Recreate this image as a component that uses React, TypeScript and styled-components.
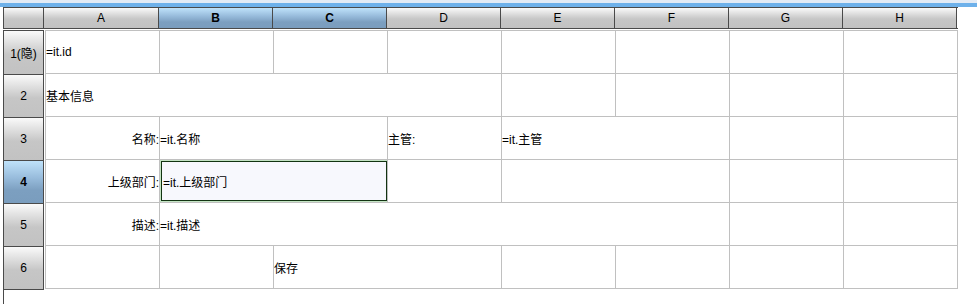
import styled, { createGlobalStyle, css } from "styled-components";

const GlobalStyle = createGlobalStyle`
  html, body {
    margin: 0;
    padding: 0;
    background: #ffffff;
  }
  body {
    font-family: "Liberation Sans", "Noto Sans CJK SC", sans-serif;
    font-size: 12px;
    color: #000;
  }
`;

type Cell = {
  text?: string;
  span?: number;
  align?: "left" | "right";
  selected?: boolean;
};

const COLS = ["A", "B", "C", "D", "E", "F", "G", "H"];
const SELECTED_COLS = ["B", "C"];
const SELECTED_ROW = 4;

const rows: { label: string; cells: Cell[] }[] = [
  {
    label: "1(隐)",
    cells: [{ text: "=it.id" }, {}, {}, {}, {}, {}, {}, {}],
  },
  {
    label: "2",
    cells: [{ text: "基本信息", span: 4 }, {}, {}, {}, {}],
  },
  {
    label: "3",
    cells: [
      { text: "名称:", align: "right" },
      { text: "=it.名称", span: 2 },
      { text: "主管:" },
      { text: "=it.主管", span: 2 },
      {},
      {},
    ],
  },
  {
    label: "4",
    cells: [
      { text: "上级部门:", align: "right" },
      { text: "=it.上级部门", span: 2, selected: true },
      {},
      { span: 2 },
      {},
      {},
    ],
  },
  {
    label: "5",
    cells: [
      { text: "描述:", align: "right" },
      { text: "=it.描述", span: 5 },
      {},
      {},
    ],
  },
  {
    label: "6",
    cells: [{}, {}, { text: "保存", span: 2 }, {}, {}, {}, {}],
  },
];

const App = () => {
  return (
    <Page>
      <GlobalStyle />
      <TopBar />
      <HeaderRow>
        <Corner />
        {COLS.map((c, i) => (
          <ColHeader key={c} first={i === 0} active={SELECTED_COLS.includes(c)}>
            {c}
          </ColHeader>
        ))}
      </HeaderRow>
      <Body>
        <RowHeaders>
          {rows.map((r, i) => (
            <RowHeader key={r.label} active={i + 1 === SELECTED_ROW}>
              {r.label}
            </RowHeader>
          ))}
        </RowHeaders>
        <Grid>
          {rows.map((r, ri) =>
            r.cells.map((cell, ci) => (
              <GridCell key={`${ri}-${ci}`} span={cell.span ?? 1} align={cell.align ?? "left"}>
                {cell.selected ? <Selection>{cell.text}</Selection> : cell.text}
              </GridCell>
            ))
          )}
        </Grid>
      </Body>
    </Page>
  );
};

export default App;

const Page = styled.div`
  width: 977px;
  height: 304px;
  overflow: hidden;
  display: flex;
  flex-direction: column;
`;

const TopBar = styled.div`
  height: 7px;
  flex-shrink: 0;
  background: linear-gradient(#e3ebf5 0 3px, #6eb1ea 3px 7px);
`;

const headerFace = css<{ active?: boolean }>`
  background: ${({ active }) =>
    active
      ? "linear-gradient(#bfe2fa 0%, #98bcdc 40%, #7c9fc0 70%, #7a9dbe 100%)"
      : "linear-gradient(#fafafa 0%, #e2e2e2 25%, #c6c6c6 55%, #c2c2c2 100%)"};
  font-weight: ${({ active }) => (active ? "bold" : "normal")};
`;

const HeaderRow = styled.div`
  display: flex;
  margin-left: 3px;
  height: 22px;
  flex-shrink: 0;
  box-sizing: border-box;
  border-top: 1px solid #4a4a4a;
  border-bottom: 1px solid #4a4a4a;
  border-left: 1px solid #4a4a4a;
  width: 955px;
`;

const Corner = styled.div`
  width: 40px;
  box-sizing: border-box;
  border-right: 1px solid #4a4a4a;
  background: linear-gradient(#fafafa 0%, #e2e2e2 25%, #c6c6c6 55%, #c2c2c2 100%);
`;

const ColHeader = styled.div<{ active?: boolean; first?: boolean }>`
  ${headerFace};
  width: ${({ first }) => (first ? 115 : 114)}px;
  box-sizing: border-box;
  border-right: 1px solid #4a4a4a;
  display: flex;
  align-items: center;
  justify-content: center;
  font-size: 12px;
  line-height: 1;
`;

const Body = styled.div`
  display: flex;
  flex: 1;
  align-items: flex-start;
  padding-top: 1px;
`;

const RowHeaders = styled.div`
  margin-left: 3px;
  width: 41px;
  align-self: stretch;
  box-sizing: border-box;
  border-left: 1px solid #4a4a4a;
  margin-right: 1px;
  display: flex;
  flex-direction: column;
`;

const RowHeader = styled.div<{ active?: boolean }>`
  ${headerFace};
  height: 43px;
  box-sizing: border-box;
  border-top: 1px solid #4a4a4a;
  border-right: 1px solid #4a4a4a;
  display: flex;
  align-items: center;
  justify-content: center;
  font-size: 12px;

  &:first-child {
    height: 44px;
  }

  &:last-child {
    height: 44px;
    border-bottom: 1px solid #4a4a4a;
  }
`;

const Grid = styled.div`
  display: grid;
  grid-template-columns: repeat(8, 114px);
  grid-auto-rows: 43px;
  border-top: 1px solid #c0c0c0;
  border-left: 1px solid #c0c0c0;
`;

const GridCell = styled.div<{ span: number; align: "left" | "right" }>`
  grid-column: span ${({ span }) => span};
  box-sizing: border-box;
  border-right: 1px solid #c0c0c0;
  border-bottom: 1px solid #c0c0c0;
  display: flex;
  align-items: center;
  justify-content: ${({ align }) => (align === "right" ? "flex-end" : "flex-start")};
  white-space: nowrap;
  overflow: hidden;
  font-size: 12px;
`;

const Selection = styled.div`
  align-self: stretch;
  flex: 1;
  margin: 1px 0 1px 1px;
  box-sizing: border-box;
  border: 1px solid #123412;
  box-shadow: 0 0 0 1px #c4e4c4;
  background: #f7f8fd;
  display: flex;
  align-items: center;
  padding-left: 1px;
`;
